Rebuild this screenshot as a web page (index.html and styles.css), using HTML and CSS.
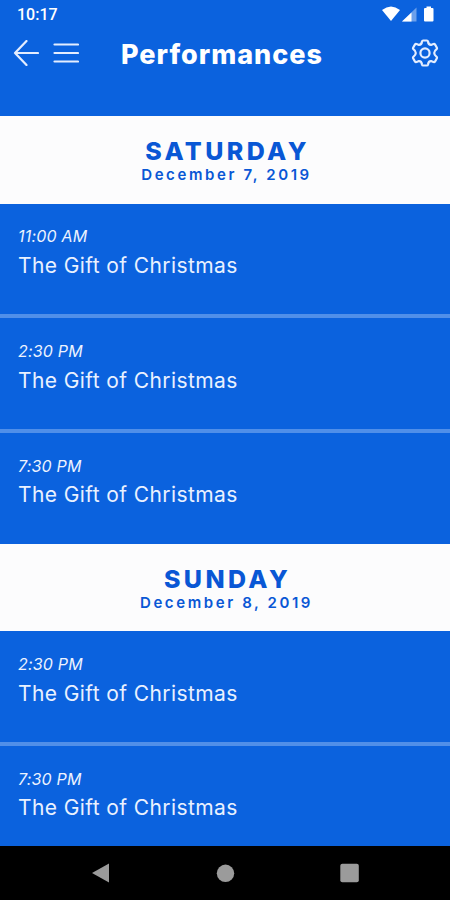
FILE: index.html
```html
<!DOCTYPE html>
<html lang="en">
<head>
  <meta charset="UTF-8" />
  <title>Performances</title>
  <meta name="viewport" content="width=device-width, initial-scale=1" />
  <link rel="stylesheet" href="styles.css">
</head>
<body>
  <header class="header">
    <div class="status-bar">
      <span class="clock">10:17</span>
      <svg class="status-icons" width="54" height="18" viewBox="0 0 54 18">
        <path d="M0 4Q9 -3 18 4L9 15Z" fill="#fff"/>
        <path d="M20 15.500L34.500 1.500V15.500Z" fill="#fff" opacity=".4"/>
        <path d="M20 15.500L29.500 6.500V15.500Z" fill="#fff"/>
        <path d="M42 3Q42 2 43 2H44.500V0.500H49V2H50.500Q51.500 2 51.500 3V14.500Q51.500 15.500 50.500 15.500H43Q42 15.500 42 14.500Z" fill="#fff"/>
      </svg>
    </div>
    <div class="toolbar">
      <svg class="back" width="26" height="26" viewBox="0 0 26 26">
        <path d="M13.500 1L2 13L13.500 25M2 13H25"/>
      </svg>
      <svg class="menu" width="26" height="26" viewBox="0 0 26 26">
        <path d="M1.500 4.500H25M1.500 13H25M1.500 21.500H25"/>
      </svg>
      <h1 class="title">Performances</h1>
      <svg class="settings" width="28" height="28" viewBox="0 0 28 28">
        <path d="M12.200 1.500H15.800Q16.800 1.500 17 2.500Q17.500 6.200 20.500 5.800L22.500 5Q23.500 4.700 24.100 5.600L25.900 8.700Q26.300 9.500 25.600 10.200C22.400 12.600 22.400 15.400 25.600 17.800Q26.300 18.500 25.900 19.300L24.100 22.400Q23.500 23.300 22.500 23L20.500 22.200Q17.500 21.800 17 25.500Q16.800 26.500 15.800 26.500H12.200Q11.200 26.500 11 25.500Q10.500 21.800 7.500 22.200L5.500 23Q4.500 23.300 3.900 22.400L2.100 19.300Q1.700 18.500 2.400 17.800C5.600 15.400 5.600 12.600 2.400 10.200Q1.700 9.500 2.100 8.700L3.900 5.600Q4.500 4.700 5.500 5L7.500 5.800Q10.500 6.200 11 2.500Q11.200 1.500 12.200 1.500Z"/>
        <circle cx="14" cy="14" r="4.600"/>
      </svg>
    </div>
  </header>

  <main class="schedule">
    <section>
      <div class="day">
        <h2 class="day-name">SATURDAY</h2>
        <p class="date">December 7, 2019</p>
      </div>
      <div class="show">
        <p class="time">11:00 AM</p>
        <p class="name">The Gift of Christmas</p>
      </div>
      <div class="show">
        <p class="time">2:30 PM</p>
        <p class="name">The Gift of Christmas</p>
      </div>
      <div class="show">
        <p class="time">7:30 PM</p>
        <p class="name">The Gift of Christmas</p>
      </div>
    </section>

    <section>
      <div class="day">
        <h2 class="day-name">SUNDAY</h2>
        <p class="date">December 8, 2019</p>
      </div>
      <div class="show">
        <p class="time">2:30 PM</p>
        <p class="name">The Gift of Christmas</p>
      </div>
      <div class="show">
        <p class="time">7:30 PM</p>
        <p class="name">The Gift of Christmas</p>
      </div>
    </section>
  </main>

  <nav class="nav-bar">
    <svg width="20" height="20" viewBox="0 0 20 20"><path d="M2 10L19 0.500V19.500Z"/></svg>
    <svg width="20" height="20" viewBox="0 0 20 20"><circle cx="10.500" cy="10.300" r="8.700"/></svg>
    <svg width="20" height="20" viewBox="0 0 20 20"><rect x="0.300" y="0.800" width="18.500" height="18.500" rx="2"/></svg>
  </nav>
</body>
</html>
```
FILE: styles.css
```css
* { box-sizing: border-box; margin: 0; padding: 0; }
body { height: 900px; display: flex; flex-direction: column; overflow: hidden; background: #0b62de; color: #fff; font-family: Inter, "Open Sans", sans-serif; }
svg { display: block; flex: none; }

.header { height: 116.4px; flex: none; }
.status-bar { height: 30px; padding: 6px 14px 0 17px; display: flex; justify-content: space-between; }
.clock { font: 500 16px/18px Roboto, sans-serif; }
.toolbar { height: 46px; padding: 0 11px 0 13px; display: flex; align-items: center; }
.toolbar svg { fill: none; stroke: #e4edff; stroke-width: 2.2; stroke-linecap: round; stroke-linejoin: round; }
.menu { margin-left: 14px; }
.title { flex: 1; margin-left: 42px; padding-top: 3px; font-size: 27px; line-height: 34px; font-weight: 800; letter-spacing: 1px; white-space: nowrap; }

.schedule { flex: 1; min-height: 0; overflow: hidden; }
.day { height: 87.4px; padding-top: 20.6px; background: #fcfcfd; color: #0957d5; text-align: center; }
.day-name { font-size: 25px; line-height: 28px; font-weight: 800; letter-spacing: 3.4px; text-indent: 5px; }
.date { font-size: 15px; line-height: 20px; font-weight: 600; letter-spacing: 2.6px; text-indent: 3px; }
.show { height: 114.6px; padding: 20.6px 18px 0; border-bottom: 4px solid #508fe9; }
.show:last-child { height: 111px; border-bottom: 0; }
.time { font-size: 16px; line-height: 24px; font-style: italic; letter-spacing: 0.2px; color: #edf3ff; }
.name { margin-top: 2.6px; font-size: 21px; line-height: 30px; letter-spacing: 0.4px; color: #e9f1ff; }

.nav-bar { height: 54px; flex: none; padding: 0 90px; display: flex; align-items: center; justify-content: space-between; background: #000; fill: #9b9b9b; }
```
